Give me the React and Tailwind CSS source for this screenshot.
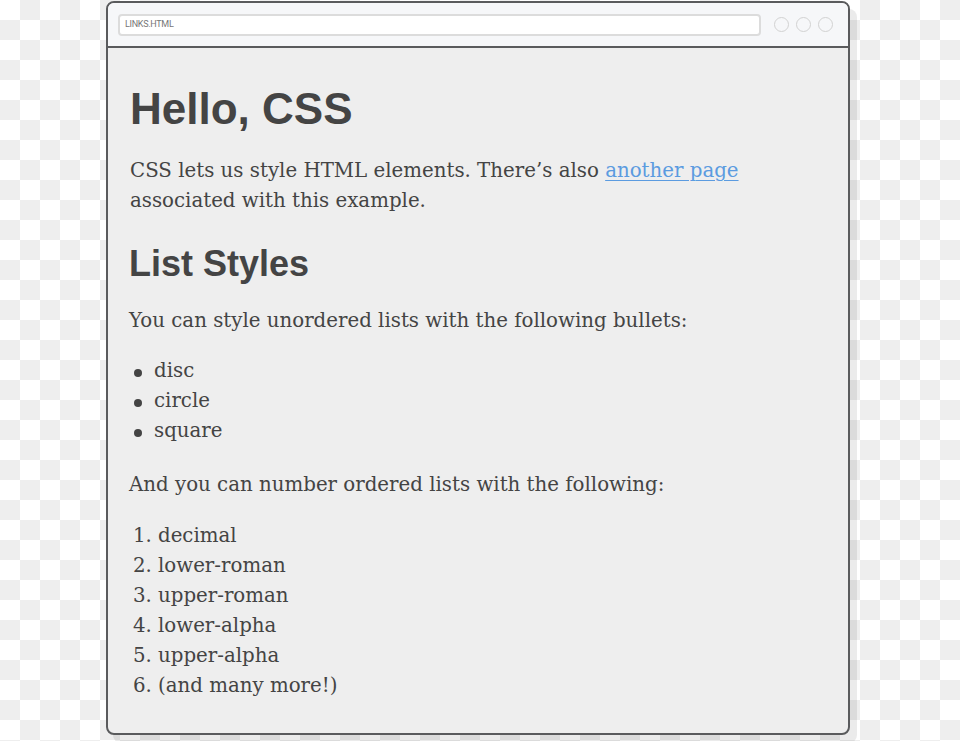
export default function App() {
  const serif = "font-['DejaVu_Serif','Liberation_Serif',serif]";
  const sans = "font-['Liberation_Sans',Arial,sans-serif]";
  return (
    <div className="w-[960px] h-[741px] overflow-hidden bg-white bg-[image:conic-gradient(#eeeeee_25%,#ffffff_0_50%,#eeeeee_0_75%,#ffffff_0)] bg-[length:40px_40px] pl-[106px] pt-[1px]">
      <div className="w-[744px] h-[734px] rounded-[8px] border-2 border-[#5a5b5d] bg-[#eeeeee] shadow-[7px_8px_0_rgba(0,0,0,0.08)] overflow-hidden flex flex-col">
        <div className="h-[45px] shrink-0 bg-[#f6f7f9] border-b-2 border-[#5a5b5d] flex items-center pl-[10px] pr-[14px] gap-[13px]">
          <div className="h-[22px] w-[643px] rounded-[4px] border-2 border-[#dcdcdc] bg-white flex items-center pl-[5px]">
            <span className="font-['Roboto',sans-serif] text-[9px] text-[#777] tracking-[-0.3px]">LINKS.HTML</span>
          </div>
          <div className="flex gap-[7px]">
            <span className="w-[15px] h-[15px] rounded-full border-[1.5px] border-[#d2d2d2]" />
            <span className="w-[15px] h-[15px] rounded-full border-[1.5px] border-[#d2d2d2]" />
            <span className="w-[15px] h-[15px] rounded-full border-[1.5px] border-[#d2d2d2]" />
          </div>
        </div>
        <div className="pl-[21px] pt-[35px] text-[#444444]">
          <h1 className={`${sans} font-bold text-[44px] leading-[52px] pl-[1px]`}>Hello, CSS</h1>
          <p className={`${serif} text-[19.8px] leading-[30px] mt-[21px] pl-[1px]`}>
            CSS lets us style HTML elements. There’s also{" "}
            <a href="#" className="text-[#5b9be0] underline underline-offset-[3px] decoration-[1px]">another page</a>
            <br />
            associated with this example.
          </p>
          <h2 className={`${sans} font-bold text-[36px] leading-[44px] mt-[26px]`}>List Styles</h2>
          <p className={`${serif} text-[19.8px] leading-[30px] mt-[20px]`}>
            You can style unordered lists with the following bullets:
          </p>
          <ul className={`${serif} text-[19.8px] leading-[30px] mt-[20px]`}>
            {["disc", "circle", "square"].map((t) => (
              <li key={t} className="flex items-center">
                <span className="w-[8px] h-[8px] rounded-full bg-[#444444] ml-[5px] mr-[12px] mt-[4px]" />
                <span>{t}</span>
              </li>
            ))}
          </ul>
          <p className={`${serif} text-[19.8px] leading-[30px] mt-[24px]`}>
            And you can number ordered lists with the following:
          </p>
          <ol className={`${serif} text-[19.8px] leading-[30px] mt-[21px]`}>
            {["decimal", "lower-roman", "upper-roman", "lower-alpha", "upper-alpha", "(and many more!)"].map((t, i) => (
              <li key={t} className="flex">
                <span className="w-[25px] ml-[4px]">{i + 1}.</span>
                <span>{t}</span>
              </li>
            ))}
          </ol>
        </div>
      </div>
    </div>
  );
}
